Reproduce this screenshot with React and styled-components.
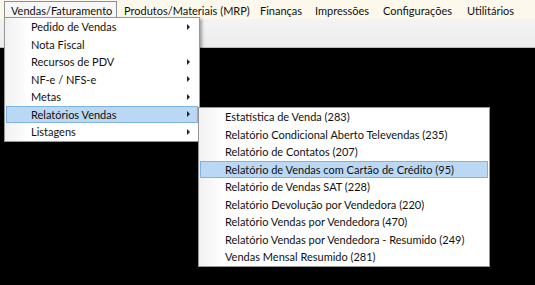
import React from "react";
import styled, { createGlobalStyle } from "styled-components";

const GlobalStyle = createGlobalStyle`
  html, body { margin: 0; padding: 0; background: #000; }
  body { font-family: Lato, "Noto Sans", sans-serif; }
  * { box-sizing: border-box; }
`;

const Screen = styled.div`
  position: relative;
  width: 535px;
  height: 285px;
  background: #000;
  display: flex;
  flex-direction: column;
  overflow: hidden;
  font-size: 11px;
  color: #111;
`;

const MenuBar = styled.div`
  display: flex;
  align-items: stretch;
  height: 19px;
  padding: 1px 0 0 4px;
  background: #fcf8ec;
`;

const BarItem = styled.div`
  display: flex;
  align-items: center;
  flex: 0 0 ${(p) => p.$width}px;
  padding-left: 6px;
  border: 1px solid ${(p) => (p.$open ? "#8e8e8e" : "transparent")};
  border-bottom: none;
  background: ${(p) => (p.$open ? "#f7f7f7" : "transparent")};
  white-space: nowrap;
`;

const ToolBand = styled.div`
  height: 29px;
  background: linear-gradient(#f4f4f4, #ececec);
  border-bottom: 1px solid #bdbdbd;
`;

const Desktop = styled.div`
  flex: 1;
  background: #000;
`;

const Menu = styled.div`
  position: absolute;
  left: ${(p) => p.$left}px;
  top: ${(p) => p.$top}px;
  width: ${(p) => p.$width}px;
  background: linear-gradient(
    to right,
    #f1f1f1 0px,
    #fbfbfb 18px,
    #ffffff 24px,
    #ffffff 100%
  );
  border: 1px solid #979797;
  box-shadow: 2px 2px 3px rgba(0, 0, 0, 0.35);
  padding: 0;
`;

const Item = styled.div`
  position: relative;
  display: flex;
  align-items: center;
  height: 17.5px;
  margin: 0 1px;
  padding-left: 24px;
  border: 1px solid ${(p) => (p.$active ? "#7eb3e6" : "transparent")};
  background: ${(p) => (p.$active ? "#bad7f4" : "transparent")};
  white-space: nowrap;
`;

const Arrow = styled.span`
  position: absolute;
  right: 7px;
  top: 50%;
  margin-top: -3px;
  width: 0;
  height: 0;
  border-top: 3px solid transparent;
  border-bottom: 3px solid transparent;
  border-left: 3px solid #222;
`;

const barItems = [
  { label: "Vendas/Faturamento", open: true, width: 113 },
  { label: "Produtos/Materiais (MRP)", width: 136 },
  { label: "Finanças", width: 55 },
  { label: "Impressões", width: 68 },
  { label: "Configurações", width: 84 },
  { label: "Utilitários", width: 70 },
];

const mainItems = [
  { label: "Pedido de Vendas", sub: true },
  { label: "Nota Fiscal" },
  { label: "Recursos de PDV", sub: true },
  { label: "NF-e / NFS-e", sub: true },
  { label: "Metas", sub: true },
  { label: "Relatórios Vendas", sub: true, active: true },
  { label: "Listagens", sub: true },
];

const subItems = [
  { label: "Estatística de Venda (283)" },
  { label: "Relatório Condicional Aberto Televendas (235)" },
  { label: "Relatório de Contatos (207)" },
  { label: "Relatório de Vendas com Cartão de Crédito (95)", active: true },
  { label: "Relatório de Vendas SAT (228)" },
  { label: "Relatório Devolução por Vendedora (220)" },
  { label: "Relatório Vendas por Vendedora (470)" },
  { label: "Relatório Vendas por Vendedora - Resumido (249)" },
  { label: "Vendas Mensal Resumido (281)" },
];

export default function App() {
  return (
    <>
      <GlobalStyle />
      <Screen>
        <MenuBar>
          {barItems.map((b) => (
            <BarItem key={b.label} $open={b.open} $width={b.width}>
              {b.label}
            </BarItem>
          ))}
        </MenuBar>
        <ToolBand />
        <Desktop />

        <Menu $left={4} $top={17} $width={196}>
          {mainItems.map((it) => (
            <Item key={it.label} $active={it.active}>
              {it.label}
              {it.sub && <Arrow />}
            </Item>
          ))}
        </Menu>

        <Menu $left={198} $top={107} $width={292}>
          {subItems.map((it) => (
            <Item key={it.label} $active={it.active}>
              {it.label}
            </Item>
          ))}
        </Menu>
      </Screen>
    </>
  );
}
